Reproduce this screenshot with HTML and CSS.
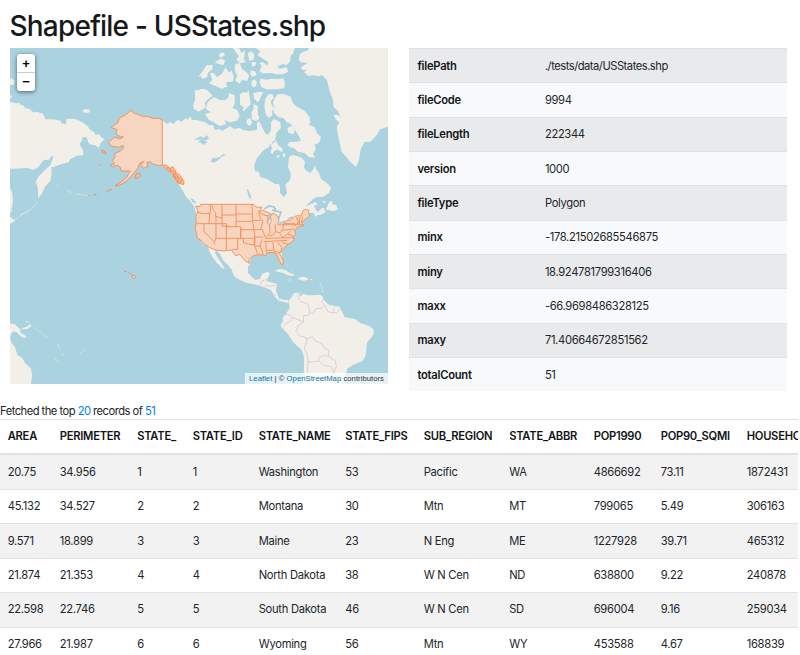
FILE: index.html
```html
<!DOCTYPE html>
<html lang="en">
<head>
<meta charset="utf-8">
<title>Shapefile - USStates.shp</title>
<link rel="stylesheet" href="styles.css">
</head>
<body>
<div class="page">
<h1>Shapefile - USStates.shp</h1>
<main class="overview">
  <section class="map">
    <svg class="map-canvas" viewBox="10 48 378 336" preserveAspectRatio="none">
      <!-- Asia and Pacific coast -->
      <g class="land" transform="translate(0 40) scale(.33333)">
        <path d="M28 185L48 190 58 188 61 194 72 197 75 204 88 206 100 217 112 216 129 221 136 238 160 238 182 242 184 250 198 253 200 237 225 236 246 246 262 258 272 270 283 277 286 285 297 282 303 292 314 298 303 308 296 323 285 316 270 313 264 306 262 295 254 290 246 293 247 299 238 312 249 330 250 346 230 347 210 358 206 367 188 371 163 380 154 382 155 403 151 422 135 440 125 462 115 474 113 442 107 427 115 410 135 390 151 376 161 348 152 350 148 359 131 360 112 384 99 389 80 384 28 387Z"/>
        <path d="M247 212L256 207 268 209 270 217 258 219 250 217ZM28 118L35 115 44 122 42 132 34 136 28 132ZM28 163L36 168 35 174 28 173ZM28 442L36 455 39 485 34 510 28 525Z"/>
        <path class="islands" d="M61 524L85 515 105 496 110 486M171 430L175 436M200 450L215 458M225 462L262 466"/>
      </g>
      <!-- Mainland North and Central America -->
      <path class="land" d="M162 120L167 124 170 122 174 124 176 121 179 120 181 122 186 118 188 120 190 116 192 120 197 120 200 121 205 122 209 125 213 125 215 130 220 129 222 131 227 128 230 126 234 129 240 128 243 130 250 131 257 130 257 123 259 121 262 127 265 133 268 135 271 130 271 122 274 119 280 122 281 128 277 132 276 135 275 140 270 144 269 147 264 150 262 152 257 158 254 166 255 171 259 172 260 177 267 179 270 181 275 184 279 184 280 187 280 193 284 197 287 193 286 187 285 185 290 180 291 174 288 167 289 157 292 155 297 156 302 158 305 162 304 168 307 171 310 173 313 170 315 165 316 169 319 173 321 179 328 184 331 188 329 193 323 197 317 197 313 199 309 203 305 207 309 205 315 202 318 204 314 206 316 210 318 212 322 208 325 208 320 213 315 217 314 213 309 213 304 217 302 221 304 224 300 225 296 228 294 233 293 238 291 241 286 245 281 249 282 256 284 264 280 263 278 258 277 253 273 251 268 252 266 255 260 254 257 253 252 257 250 260 250 264 248 267 248 273 252 277 255 280 260 279 262 274 267 272 270 273 268 278 266 281 270 282 277 284 276 291 279 298 284 300 288 300 288 303 284 302 279 301 274 296 271 290 266 288 260 286 253 284 247 283 240 280 235 277 233 274 232 270 227 264 223 260 220 254 216 250 215 253 218 258 222 264 225 269 222 268 217 263 214 259 210 253 208 247 202 243 197 234 196 224 196 213 194 206 190 201 186 197 183 191 178 183 173 176 168 169 162 166Z"/>
      <g class="land" transform="translate(190 40) scale(.33333)">
        <path d="M358 23L354 31 338 37 329 42 326 60 333 67 353 68 333 82 336 89 350 89 342 97 355 108 370 106 385 109 396 105 411 121 418 150 428 177 431 202 443 211 453 235 447 248 440 260 445 290 455 335 470 352 480 365 498 381 507 360 512 327 524 306 541 305 558 288 570 268 594 260V20Z"/>
        <path d="M430 224L445 225 457 239 450 249 437 238Z"/>
        <!-- Arctic archipelago -->
        <path d="M15 151L28 149 36 146 50 149 68 167 52 179 44 190 48 202 25 215 12 206 9 197 15 180Z"/>
        <path d="M63 178L72 171 88 180 105 181 116 172 116 159 134 166 134 192 127 204 142 210 149 228 141 242 120 247 104 240 108 253 89 258 69 245 57 240 45 222 62 217 48 207 53 187Z"/>
        <path d="M25 110L40 91 50 76 67 75 68 86 54 98 51 112 37 117 32 108ZM86 43L100 37 105 45 92 54ZM74 67L93 56 105 61 101 75 86 72Z"/>
        <path d="M60 100L70 98 82 112 95 102 107 82 117 98 125 91 131 110 128 125 109 126 111 140 94 146 75 137 57 130 67 120Z"/>
        <path d="M128 23L148 25 154 38 165 32 162 60 170 66 150 70 139 58 147 49ZM135 73L149 69 157 88 169 96 177 106 172 123 157 119 148 131 136 122 142 106 134 90ZM173 40L184 34 193 44 191 59 178 63ZM184 67L199 66 196 77 187 80ZM181 91L195 94 200 105 189 110 181 104Z"/>
        <path d="M196 23L315 23 309 41 302 49 300 65 288 76 279 72 262 79 269 86 290 81 295 95 279 103 259 103 243 99 220 100 208 95 215 78 208 68 220 67 231 77 235 66 214 53 202 45 211 34Z"/>
        <path d="M211 116L232 119 245 116 265 117 281 115 285 131 282 145 258 148 231 148 215 142 209 130ZM185 123L193 118 201 125 198 138 190 143 185 136Z"/>
        <path d="M150 163L160 156 170 158 176 151 180 178 182 194 171 203 162 213 157 208 162 202 150 194ZM190 160L205 156 220 156 212 171 208 182 201 187 192 175ZM191 192L203 197 204 224 208 235 199 244 186 238 184 219 190 207ZM170 239L181 234 187 249 178 258 170 251Z"/>
        <path d="M226 177L235 163 247 161 251 173 242 184 244 193 256 207 246 212 247 225 238 234 228 225 223 199ZM254 175L263 163 280 162 302 170 307 186 318 198 330 205 345 214 358 230 361 244 357 255 374 261 381 280 393 291 387 309 374 313 377 329 369 341 376 353 358 352 344 340 324 335 311 324 300 322 292 315 299 306 320 305 333 302 325 285 315 270 302 252 289 246 281 235 265 231 250 216 254 201 249 188ZM292 264L305 258 315 271 309 283 295 278Z"/>
        <path d="M241 307L250 311 257 301 266 317 279 327 275 337 263 328 253 333 247 343 241 337 246 325ZM260 347L269 344 267 352 260 353ZM277 342L285 340 286 350 280 352Z"/>
        <path d="M408 509L418 485 427 482 426 492 439 496 444 509 430 513ZM396 484L408 484 403 490ZM376 524L391 515 401 507 407 516 391 525Z"/>
      </g>
      <g class="water" transform="translate(190 40) scale(.33333)">
        <path d="M11 299L32 289 40 293 52 286 57 297 43 302 53 306 41 315 32 308 23 307 34 299ZM62 365L68 353 77 355 91 350 99 342 108 345 95 350 85 360 72 368ZM170 447L174 448 183 467 184 479 176 471ZM344 371L355 366 366 374 367 387 358 397 348 391ZM0 474L10 478 22 492 8 487Z"/>
      </g>
      <!-- South America, Caribbean -->
      <g class="land" transform="translate(240 250) scale(.33333)">
        <path d="M145 153L154 143 162 130 176 128 186 125 183 134 192 132 205 136 220 136 240 134 249 140 252 151 266 164 299 170 307 187 314 202 345 207 361 219 389 229 401 239 401 253 381 278 377 316 368 333 340 344 323 355 316 377 306 405H188L192 360 192 321 185 300 159 276 144 253 124 231 122 222 129 216 128 203 139 190 149 174Z"/>
        <path d="M104 62L119 57 136 60 150 69 163 74 159 79 142 76 130 69 113 65ZM177 82L193 80 206 86 202 90 190 92 173 87ZM144 88L155 89 151 92ZM211 87L218 88 217 91 211 90Z"/>
        <path class="islands" d="M140 43L145 49M153 57L157 62M239 95L246 112 250 128"/>
      </g>
      <path class="water" d="M299.500 293L301 291 302 295 300 297Z"/>
      <g class="land" transform="translate(0 210) scale(.33333)">
        <path d="M28 339L45 343 53 351 63 360 59 366 77 377 78 384 66 382 50 367 41 364 33 372 30 384 37 402 45 410 52 434 66 443 76 460 92 475 97 495 92 525H28ZM28 0L35 1 36 5 28 8ZM28 19L37 26 47 30 37 38 28 41ZM65 354L79 351 91 343 94 347 84 356 68 358Z"/>
        <path class="islands" d="M48 28L60 18 88 0M102 350L110 359M115 362L126 370M130 374L143 384M172 402L175 410 183 420M161 443L176 457M238 428L244 428M248 422L254 418M186 430L190 438M76 334L90 338"/>
      </g>
      <g class="borders" transform="translate(240 250) scale(.33333)">
        <path d="M58 105L65 101 62 95 74 90 80 86M71 111L81 106 92 109 108 105M94 126L97 132 109 136M118 144L120 151M176 128L173 142 181 154 205 163 208 184 207 195 191 197 190 216 174 228 168 244 180 258 193 261 202 267 218 260 224 272 246 281 252 293 266 300 266 319 286 333 289 350 280 371M208 184L218 192 227 177 247 174 254 167 245 155 251 147M254 167L265 186 279 188 284 170M279 188L291 188 301 176M133 193L146 194 158 202 191 216M158 202L151 214 137 221 131 229M193 261L201 271 193 297 202 314 204 335 214 336 234 333 239 321 253 316 266 319M204 335L202 368M234 333L253 346 273 350 281 364 266 387"/>
      </g>
      <path class="borders" d="M299 276L301 276 300 279"/>
      <!-- Shapefile features -->
      <g class="feature" transform="translate(0 40) scale(.33333)">
        <path d="M333 263L343 256 354 248 358 234 376 225 385 218 394 211 401 219 414 223 424 228 445 230 460 236 475 234 487 240V376L472 376 458 371 451 366 440 367 444 379 431 385 422 374 433 363 419 370 415 382 401 400 386 417 372 429 353 437 347 436 363 426 380 412 386 401 391 393 363 393 361 382 352 376 338 379 332 374 344 371 338 362 345 351 344 341 361 333 370 325 369 316 357 322 336 319 325 307 343 292 359 297 370 291 354 287 348 278 352 269Z"/>
        <path class="isle" d="M405 414L409 401 419 400 422 407 413 414ZM487 375L500 376 510 385 519 380 527 397 540 406 552 424 551 434 539 430 526 418 518 402 499 387Z"/>
        <path class="isle" d="M303 331L314 333 319 342 309 337Z"/>
        <path d="M501 380L522 396 519 410 535 413 533 430 546 423 539 415 525 402 528 389M510 388L514 398M524 405L530 424 542 432M296 374L301 375M319 456L328 450 336 449M345 439L354 432M264 466L269 467M280 465L290 463"/>
      </g>
      <g class="feature" transform="translate(190 190) scale(.33333)">
        <path d="M17 48L29 50 32 43H190L199 51 216 52 207 65 218 61 236 68 244 73 235 76 232 89 233 101 239 104 244 92 241 80 249 69 262 77 267 91 263 103 275 105 285 98 290 91 302 91 314 79 326 76 333 79 339 62 347 58 355 60 358 78 347 87 336 97 341 108 327 108 314 120 317 131 309 141 312 149 303 158 291 164 279 179 268 189 278 207 281 221 274 223 267 210 258 190 245 187 230 189 227 197 215 194 203 195 189 198 176 209 178 220 164 211 149 193 137 197 124 180 102 183 76 180 59 173 43 162 35 154 22 143 16 116 19 99 18 79 24 63Z"/>
        <path d="M60 43L62 61 59 71 57 101M65 43L69 59 77 67 77 79 96 84M21 67L41 71 61 70M19 101H80M78 77V142L72 163M42 101V125L72 154M96 43V75H138M96 75V108H119M80 101H109V180M109 110H152V145H77M138 43V72L139 94H185M138 72H185M138 94V110M152 119H191M185 43L188 69 187 89 192 119 195 145M152 145H193L192 165 180 163 161 159 160 145M143 145V178H126M152 117V145M187 91H214M207 65L208 79 219 94 213 113 221 128 225 142M191 120L214 118M192 141H220M195 145L194 168 200 183 203 194M194 168H215M217 148L209 167 216 181 219 194M228 157L229 187M221 155L292 151M225 145L310 143M248 157L252 181H230M262 156L276 173 271 188 252 184M276 157L292 162M239 105L240 128 229 142M255 103L257 125 248 136 237 137M282 100L278 117 270 129 257 125M278 104H318L327 97M277 121L309 117 315 121M270 131L278 143 293 132 304 122M293 132L310 138M283 100H314L319 110M319 81L325 95 322 104M327 80L329 101M337 80L335 98M322 103L340 103M207 67L224 76 236 78"/>
      </g>
      <g class="feature" transform="translate(0 210) scale(.33333)">
        <path d="M396 199L402 196 407 200 403 206 398 204Z"/>
        <path d="M372 184L379 185M385 187L389 189M391 190L397 193"/>
      </g>
      <path class="lakes" d="M264 209L269 206 274 207 276 211 272 210M274 211L281 212 279 218 277 216M271 213L268 222M279 224L285 221M288 219L293 217"/>
    </svg>
    <div class="zoom-control"><a>+</a><a>−</a></div>
    <div class="attribution"><a>Leaflet</a> | © <a>OpenStreetMap</a> contributors</div>
  </section>
  <table class="info">
    <tr><th>filePath</th><td class="path">./tests/data/USStates.shp</td></tr>
    <tr><th>fileCode</th><td>9994</td></tr>
    <tr><th>fileLength</th><td>222344</td></tr>
    <tr><th>version</th><td>1000</td></tr>
    <tr><th>fileType</th><td>Polygon</td></tr>
    <tr><th>minx</th><td>-178.21502685546875</td></tr>
    <tr><th>miny</th><td>18.924781799316406</td></tr>
    <tr><th>maxx</th><td>-66.9698486328125</td></tr>
    <tr><th>maxy</th><td>71.40664672851562</td></tr>
    <tr><th>totalCount</th><td>51</td></tr>
  </table>
</main>
<p class="summary">Fetched the top <span>20</span> records of <span>51</span></p>
<table class="records">
  <colgroup><col class="c-area"><col class="c-perimeter"><col class="c-state"><col class="c-id"><col class="c-name"><col class="c-fips"><col class="c-region"><col class="c-abbr"><col class="c-pop"><col class="c-sqmi"><col class="c-house"></colgroup>
  <thead><tr><th>AREA</th><th>PERIMETER</th><th>STATE_</th><th>STATE_ID</th><th>STATE_NAME</th><th>STATE_FIPS</th><th>SUB_REGION</th><th>STATE_ABBR</th><th>POP1990</th><th>POP90_SQMI</th><th>HOUSEHOLDS</th></tr></thead>
  <tbody>
    <tr><td>20.75</td><td>34.956</td><td>1</td><td>1</td><td>Washington</td><td>53</td><td>Pacific</td><td>WA</td><td>4866692</td><td>73.11</td><td>1872431</td></tr>
    <tr><td>45.132</td><td>34.527</td><td>2</td><td>2</td><td>Montana</td><td>30</td><td>Mtn</td><td>MT</td><td>799065</td><td>5.49</td><td>306163</td></tr>
    <tr><td>9.571</td><td>18.899</td><td>3</td><td>3</td><td>Maine</td><td>23</td><td>N Eng</td><td>ME</td><td>1227928</td><td>39.71</td><td>465312</td></tr>
    <tr><td>21.874</td><td>21.353</td><td>4</td><td>4</td><td>North Dakota</td><td>38</td><td>W N Cen</td><td>ND</td><td>638800</td><td>9.22</td><td>240878</td></tr>
    <tr><td>22.598</td><td>22.746</td><td>5</td><td>5</td><td>South Dakota</td><td>46</td><td>W N Cen</td><td>SD</td><td>696004</td><td>9.16</td><td>259034</td></tr>
    <tr><td>27.966</td><td>21.987</td><td>6</td><td>6</td><td>Wyoming</td><td>56</td><td>Mtn</td><td>WY</td><td>453588</td><td>4.67</td><td>168839</td></tr>
  </tbody>
</table>
</div>
</body>
</html>
```
FILE: styles.css
```css
* { box-sizing: border-box; }
body { margin: 0; background: #fff; color: #212529; font: 11.2px/16.8px Inter, "Liberation Sans", sans-serif; letter-spacing: -.28px; }
.page { width: 798px; height: 655px; overflow: hidden; }
h1 { margin: 0; height: 48px; padding: 9px 0 0 9.500px; font-size: 28px; line-height: 34px; font-weight: 500; letter-spacing: -.79px; color: #16191c; }
.overview { display: grid; grid-template-columns: 378px 378px; column-gap: 21px; padding-left: 10px; }
.map { position: relative; height: 336px; overflow: hidden; background: #aad3df; }
.map-canvas { display: block; width: 378px; height: 336px; }
.land { fill: #f2efe9; }
.land .islands { fill: none; stroke: #dce5e3; stroke-width: 2.500; }
.water { fill: #aad3df; }
.borders { fill: none; stroke: #d7bfd8; stroke-width: 2.200; }
path.borders { stroke-width: .7; }
.feature path { fill: none; stroke: #f9884d; stroke-width: 2.600; stroke-linejoin: round; }
.feature path:first-child { fill: #f6d6c0; }
.feature .isle { fill: #f5bd98; }
.lakes { fill: none; stroke: #a7c9d6; stroke-width: 1.700; }
.zoom-control { position: absolute; left: 7px; top: 6px; width: 18px; height: 37px; overflow: hidden; background: #fff; border-radius: 3px; box-shadow: 0 1px 4px rgba(0, 0, 0, .55); }
.zoom-control a { display: block; height: 18px; color: #000; font: bold 13px/20px "Liberation Sans", sans-serif; letter-spacing: 0; text-align: center; }
.zoom-control a + a { height: 19px; border-top: 1px solid #ccc; line-height: 18px; }
.attribution { position: absolute; right: 0; bottom: 0; width: 143px; height: 11px; background: rgba(255, 255, 255, .7); color: #333; font: 7.700px/11px "Liberation Sans", sans-serif; letter-spacing: .03px; text-align: center; white-space: nowrap; }
.attribution a { color: #0078a8; }
table { border-collapse: separate; border-spacing: 0; table-layout: fixed; }
th, td { padding: 0 8.400px; text-align: left; white-space: nowrap; }
th { font-weight: 600; letter-spacing: -.25px; color: #111417; }
.info { width: 378px; background: #f8f9fa; }
.info th { width: 127.500px; }
.info th, .info td { height: 34.340px; padding-top: 1px; border-top: 1px solid #dee2e6; }
.info td { letter-spacing: -.33px; }
.info .path { letter-spacing: -.49px; }
.info tr:nth-child(odd) { background: #e9eaeb; }
.summary { margin: 11.500px 0 0; height: 16px; letter-spacing: -.52px; }
.summary span { color: #007bff; }
.records { width: 830px; }
.records th, .records td { height: 34.350px; padding: 0 0 0 7.700px; border-top: 1px solid #dee2e6; }
.records thead th { height: 36px; border-bottom: 2px solid #dee2e6; }
.records tbody tr:first-child td { border-top: 0; }
.records tbody tr:nth-child(odd) { background: #f2f2f2; }
.c-area { width: 52px; }
.c-perimeter { width: 77.500px; }
.c-state { width: 55.500px; }
.c-id { width: 66px; }
.c-name { width: 86.500px; }
.c-fips { width: 78.500px; }
.c-region { width: 85.500px; }
.c-abbr { width: 84.500px; }
.c-pop { width: 67px; }
.c-sqmi { width: 86px; }
.c-house { width: 91px; }
```
